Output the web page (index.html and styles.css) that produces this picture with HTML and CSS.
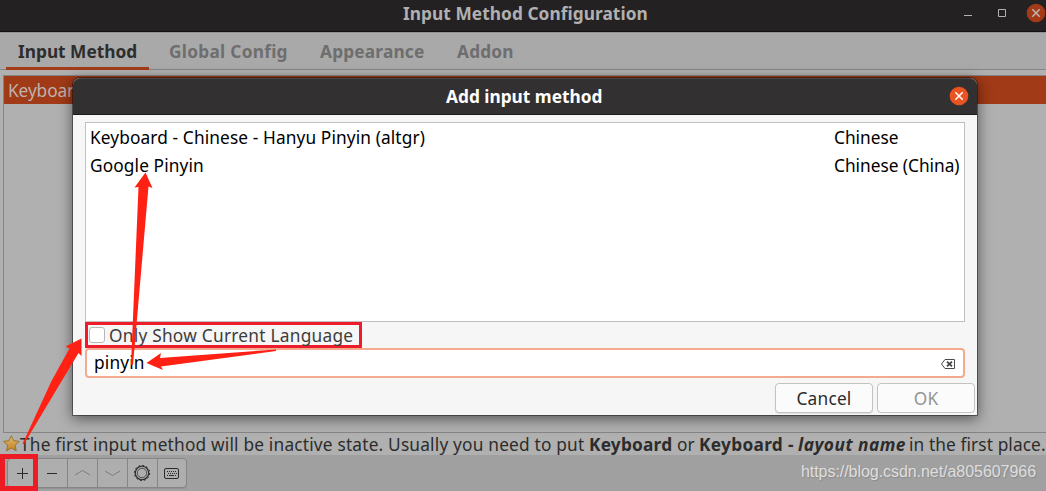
FILE: index.html
```html
<!DOCTYPE html>
<html lang="en">
<head>
<meta charset="utf-8">
<title>Input Method Configuration</title>
<link rel="stylesheet" href="styles.css">
</head>
<body>
<div class="window">
  <header class="titlebar">
    <h1 class="title">Input Method Configuration</h1>
    <div class="controls">
      <svg width="9" height="13" viewBox="0 0 9 13"><path d="M0 8.500h8" stroke="#b2b2b2" fill="none"/></svg>
      <svg width="8" height="13" viewBox="0 0 8 13"><path d="M.5 2.500h7v7h-7z" stroke="#b2b2b2" fill="none"/></svg>
      <svg width="20" height="20" viewBox="0 0 20 20"><circle cx="10" cy="10" r="9.300" fill="#a33b18"/><path d="M6.300 6.300l7.400 7.400M13.700 6.300l-7.400 7.400" stroke="#c0b5b0" stroke-width="1.500"/></svg>
    </div>
  </header>
  <nav class="tabs">
    <span class="tab active">Input Method</span>
    <span class="tab">Global Config</span>
    <span class="tab">Appearance</span>
    <span class="tab">Addon</span>
  </nav>
  <main class="content">
    <div class="list"><div class="list-row">Keyboard - English (US)</div></div>
  </main>
  <p class="hint">
    <svg class="star" width="17" height="17" viewBox="0 0 17 17"><defs><linearGradient id="gold" x2="0" y2="1"><stop offset="0" stop-color="#e0bd72"/><stop offset="1" stop-color="#c27f20"/></linearGradient></defs><path d="M8.300.8l2.400 4.900 5.400.7-3.900 3.800 1 5.600-4.900-2.700-4.700 2.700 1-5.600L.6 6.400l5.300-.7z" fill="url(#gold)" stroke="#8b671f" stroke-width=".8" stroke-linejoin="round"/></svg>
    <span class="h1">The first input method will be inactive state. Usually you need to put</span>
    <b class="h2">Keyboard</b>
    <span class="h3">or</span>
    <b class="h4">Keyboard -</b>
    <b class="h5"><i>layout name</i></b>
    <span class="h6">in the first place.</span>
  </p>
  <footer class="toolbar">
    <div class="buttons">
      <span class="tool"><svg width="20" height="20"><path d="M5 10.500h11M10.500 5v11" stroke="#2b2b2b" fill="none"/></svg></span>
      <span class="tool"><svg width="20" height="20"><path d="M5 10.500h10" stroke="#2b2b2b" fill="none"/></svg></span>
      <span class="tool"><svg width="20" height="20"><path d="M3 12l7.500-4.500 7.500 4.500" stroke="#7d7d7d" fill="none"/></svg></span>
      <span class="tool"><svg width="20" height="20"><path d="M3 8l7.500 4.500L18 8" stroke="#7d7d7d" fill="none"/></svg></span>
      <span class="tool"><svg width="20" height="20"><circle cx="10" cy="10" r="6.700" stroke="#2b2b2b" stroke-width="1.100" fill="none"/><circle cx="10" cy="10" r="4.700" stroke="#3a3a3a" stroke-width=".8" fill="none"/><circle cx="10" cy="10" r="7.600" stroke="#2b2b2b" stroke-width="1" stroke-dasharray="2 1.979" fill="none"/></svg></span>
      <span class="tool"><svg width="20" height="20"><rect x="2.500" y="5.500" width="14" height="10" rx="1.500" stroke="#2b2b2b" fill="none"/><path d="M5 8.500h10M6 10.500h9" stroke="#2b2b2b" stroke-dasharray="1 1"/><path d="M5 12.500h1M7 12.500h5M13 12.500h1" stroke="#2b2b2b"/></svg></span>
    </div>
    <span class="watermark">https://blog.csdn.net/a805607966</span>
  </footer>
</div>

<section class="dialog">
  <header class="dialog-head">
    <h2 class="title">Add input method</h2>
    <svg class="close" width="20" height="20" viewBox="0 0 20 20"><circle cx="10" cy="10" r="9.300" fill="#e95420"/><path d="M6.300 6.300l7.400 7.400M13.700 6.300l-7.400 7.400" stroke="#fff" stroke-width="1.500"/></svg>
  </header>
  <div class="dialog-body">
    <div class="results">
      <div class="result"><span>Keyboard - Chinese - Hanyu Pinyin (altgr)</span><span class="lang">Chinese</span></div>
      <div class="result"><span>Google Pinyin</span><span class="lang">Chinese (China)</span></div>
    </div>
    <div class="check"><span class="box"></span><span>Only Show Current Language</span></div>
    <div class="entry"><span>pinyin</span>
      <svg width="16" height="12" viewBox="0 0 16 12"><path d="M5 1.500h9.500v9H5L1.500 6z" stroke="#4a4a4a" fill="none" stroke-width="1"/><path d="M7 3.700l5 4.600M12 3.700l-5 4.600" stroke="#444" stroke-width="1.800"/></svg>
    </div>
    <div class="actions"><span class="btn">Cancel</span><span class="btn disabled">OK</span></div>
  </div>
</section>

<div class="mark-add"></div>
<svg class="arrows" width="1046" height="491" viewBox="0 0 1046 491" fill="#ff2114">
  <path d="M22.500 444L51.500 381 69.500 348.500 65.500 346.500 81.500 338.500 81.500 356 78.500 353 60.500 383 24 444Z"/>
  <path d="M131 365L138.500 187 134.500 187.500 145.500 172.500 152.500 188 148.500 186.500 133 365Z"/>
  <path d="M276 349.500L276 351 161 366.500 163 370 146.500 363 161 353 160 358Z"/>
</svg>
</body>
</html>
```
FILE: styles.css
```css
* { box-sizing: border-box; }
body { margin: 0; width: 1046px; height: 491px; overflow: hidden; font: 17.3px/28px "Noto Sans", "Open Sans", sans-serif; color: #2c2c2c; background: #a0a0a0; white-space: nowrap; }
svg { display: block; flex: none; }
h1, h2, p { margin: 0; font-size: inherit; }
.window { width: 1046px; height: 491px; display: flex; flex-direction: column; overflow: hidden; }
.titlebar { height: 32px; flex: none; background: #242122; border-bottom: 1px solid #111; display: grid; grid-template-columns: 403px 1fr auto; color: #b1b0b0; letter-spacing: .06px; }
.title { line-height: 27px; grid-column: 2; }
.dialog-head .title { grid-column: 2; line-height: 35px; }
.controls { display: flex; gap: 20px; padding-top: 7px; width: 82px; }
.controls svg:nth-child(2) { margin-left: 5px; }
.controls svg:last-child { margin-top: -4px; }
.tabs { height: 38px; flex: none; display: flex; padding-left: 6px; gap: 8px; background: #a9a9a9; border-top: 1px solid #929292; border-bottom: 1px solid #858585; font-weight: bold; color: #6e6e6e; letter-spacing: .18px; }
.tab { height: 37px; padding: 4px 12px 0; line-height: 29px; flex: none; }
.tab:nth-child(1) { width: 143px; }
.tab:nth-child(2) { width: 143px; letter-spacing: .27px; }
.tab:nth-child(3) { width: 129px; }
.active { color: #2d2d2d; border-bottom: 3px solid #a43b17; letter-spacing: 0; }
.content { height: 363px; flex: none; padding: 5px 0 0 3px; background: #b0b0b0; }
.list { height: 358px; border: solid #858585; border-width: 1px 0 1px 1px; }
.list-row { height: 28px; background: #a13a17; color: #beb3ae; padding-left: 4px; line-height: 29px; letter-spacing: -.1px; }
.hint { height: 22px; flex: none; display: flex; background: #b0b0b0; line-height: 23px; padding-left: 3px; }
.star { margin-top: 2px; }
.hint > span, .hint > b { flex: none; }
.h1 { width: 569px; letter-spacing: .19px; }
.h2 { width: 88px; letter-spacing: .2px; }
.h3 { width: 22px; }
.h4 { width: 99px; letter-spacing: .3px; }
.h5 { width: 111px; letter-spacing: .5px; }
.h6 { letter-spacing: .1px; }
.toolbar { flex: 1; display: flex; justify-content: space-between; background: #a0a0a0; padding: 3px 10px 2px 7px; }
.buttons { display: flex; height: 30px; border: 1px solid #858585; border-radius: 4px; background: #aeaeae; box-shadow: 0 1px 0 #929292; }
.tool { width: 30px; height: 28px; padding: 4px 4px; border-right: 1px solid #858585; }
.tool:last-child { border-right: 0; width: 28px; }
.watermark { font: 16px/27px "Liberation Sans", sans-serif; letter-spacing: -.05px; color: #dedede; text-shadow: 1px 1px 1px #8b8b8b; }
.dialog { position: absolute; left: 73px; top: 78px; width: 904px; height: 337px; border-radius: 7px 7px 0 0; background: #f6f6f6; box-shadow: 0 0 0 1px rgba(0,0,0,.4), 0 3px 14px 1px rgba(0,0,0,.5); }
.dialog-head { height: 37px; background: #333031; border-top: 1px solid #484546; border-bottom: 1px solid #1c1c1c; border-radius: 7px 7px 0 0; color: #fff; display: grid; grid-template-columns: 373px 1fr 28px; }
.close { margin-top: 7px; }
.dialog-body { padding: 7px 2px 0 12px; }
.results { width: 880px; height: 200px; background: #fff; border: 1px solid #c0c0c0; color: #000; padding: 1px 4px; letter-spacing: .11px; }
.result { display: flex; justify-content: space-between; height: 28px; }
.lang { width: 126px; letter-spacing: -.02px; }
.check { width: 277px; height: 26px; border: 3px solid #ed1c2a; display: flex; color: #3d3d3d; line-height: 21px; letter-spacing: .25px; }
.box { width: 16px; height: 16px; margin: 2px 4px 0 1px; border: 1px solid #b8b8b8; border-radius: 3px; background: #fff; }
.entry { width: 880px; height: 30px; border: 2px solid #f4aa8e; border-radius: 4px; background: #fff; color: #000; padding: 0 7px; line-height: 25px; display: flex; justify-content: space-between; letter-spacing: .15px; }
.entry svg { margin-top: 8px; }
.actions { display: flex; justify-content: flex-end; gap: 4px; margin-top: 5px; }
.btn { width: 98px; height: 30px; border: 1px solid #c3c3c3; border-radius: 4px; background: #fbfbfb; text-align: center; line-height: 29px; letter-spacing: .2px; box-shadow: 0 1px 1px #ddd; }
.disabled { color: #949494; box-shadow: none; }
.mark-add { position: absolute; left: 0; top: 454px; width: 38px; height: 37px; border: 5px solid #ed1c24; }
.arrows { position: absolute; left: 0; top: 0; }
```
